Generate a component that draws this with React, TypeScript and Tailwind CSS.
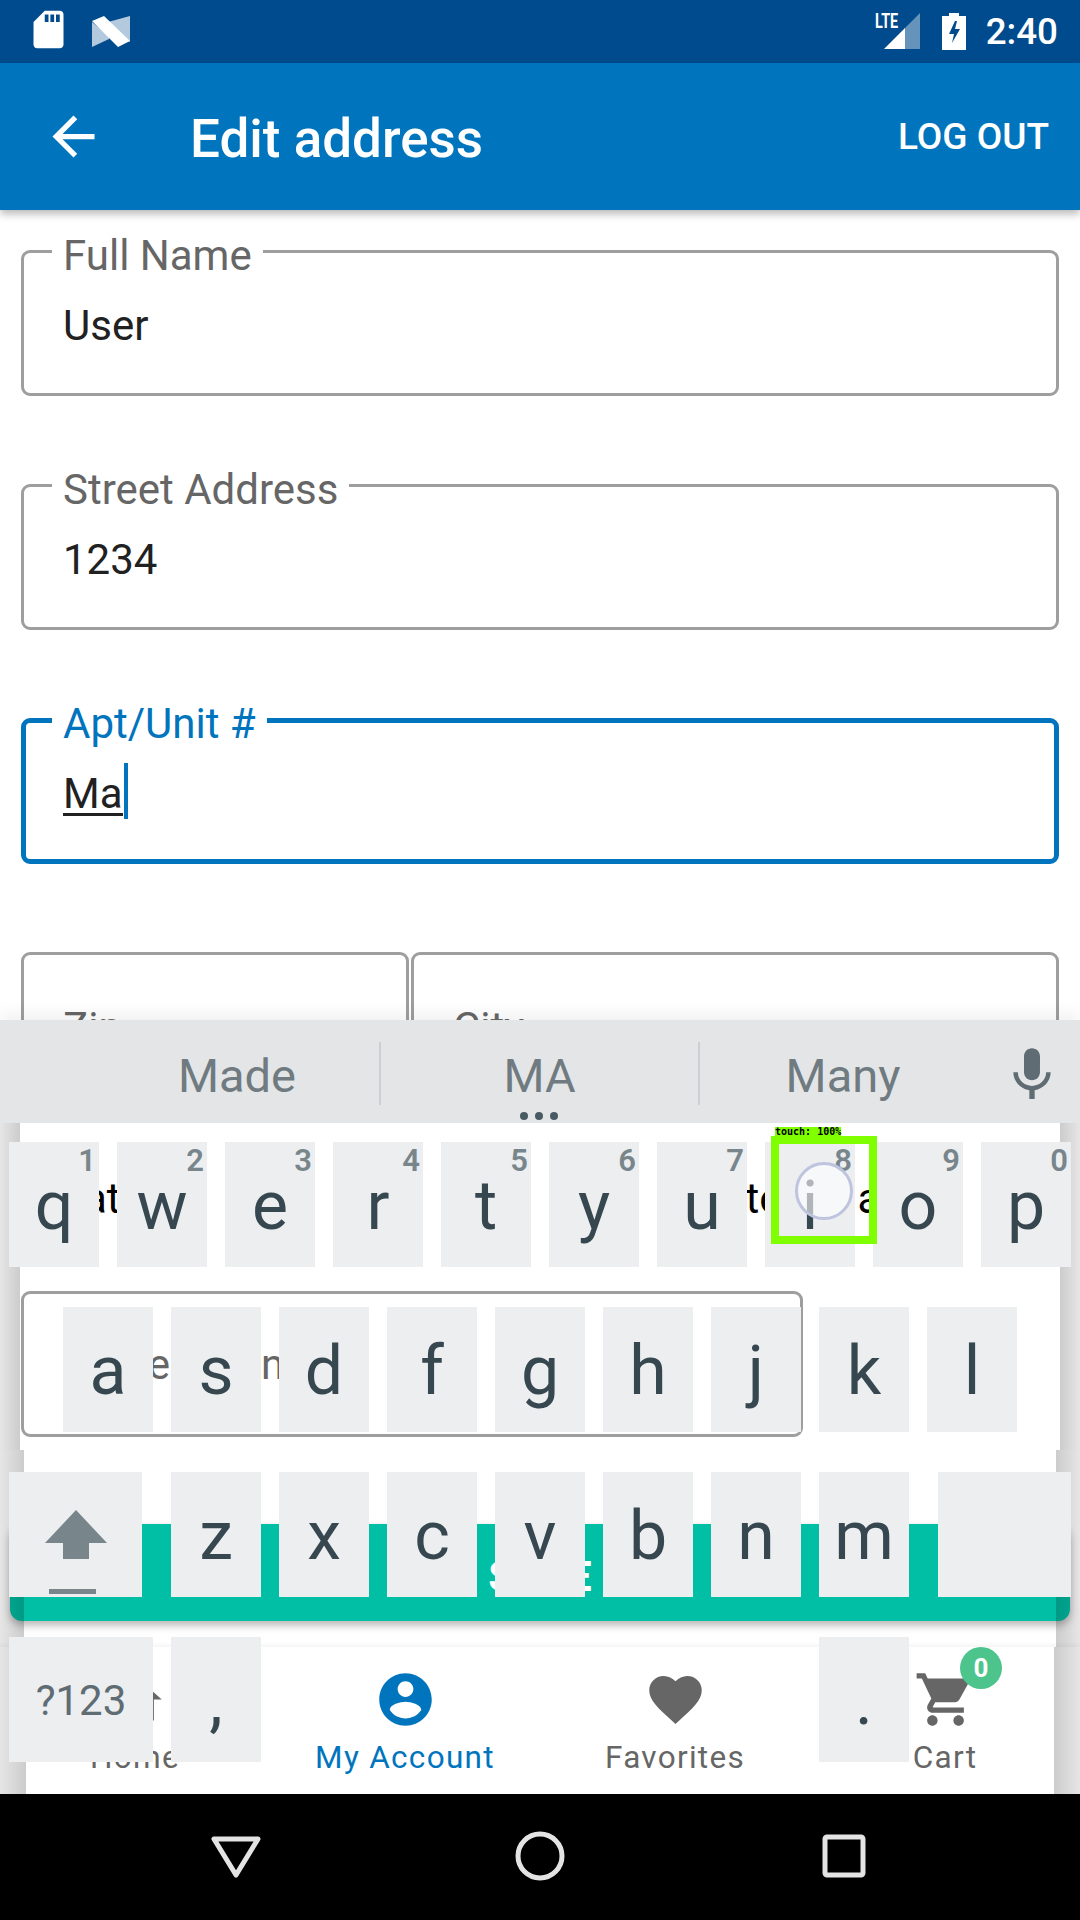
import type { ReactNode } from 'react';

const ROW_1 = [['q', '1'], ['w', '2'], ['e', '3'], ['r', '4'], ['t', '5'], ['y', '6'], ['u', '7'], ['i', '8'], ['o', '9'], ['p', '0']];
const ROW_2 = ['a', 's', 'd', 'f', 'g', 'h', 'j', 'k', 'l'];
const ROW_3 = ['z', 'x', 'c', 'v', 'b', 'n', 'm'];

function Field({ label, value, focused, placeholder, className }: { label?: string; value?: ReactNode; focused?: boolean; placeholder?: string; className?: string }) {
  return (
    <div className={`relative h-[146px] rounded-[9px] bg-white ${focused ? 'border-[5px] border-[#0075BE] pl-[37px] pt-[46px]' : 'border-[3px] border-[#9E9E9E] pl-[39px] pt-[48px]'} ${className ?? ''}`}>
      {label && (
        <span className={`absolute bg-white px-[11px] text-[42px] leading-[50px] ${focused ? 'left-[26px] top-[-24px] text-[#0075BE]' : 'left-[28px] top-[-22px] text-[#666666]'}`}>
          {label}
        </span>
      )}
      {placeholder && <span className="text-[42px] leading-[50px] text-[#666666]">{placeholder}</span>}
      {value && <div className="text-[42px] leading-[50px] text-[#212121]">{value}</div>}
    </div>
  );
}

function Key({ letter, digit, className }: { letter?: ReactNode; digit?: string; className?: string }) {
  return (
    <div className={`relative flex h-[125px] items-center justify-center bg-[#ECEEF0] pt-[3px] text-[68px] leading-[122px] text-[#37474F] ${className ?? 'w-[90px]'}`}>
      {digit && <span className="absolute right-[3px] top-[1px] text-[31px] font-semibold leading-[36px] text-[#78868C]">{digit}</span>}
      {letter}
    </div>
  );
}

function NavItem({ label, active, children }: { label: string; active?: boolean; children: ReactNode }) {
  return (
    <div className={`relative flex flex-1 flex-col items-center pt-[21px] ${active ? 'text-[#0075BE]' : 'text-[#666666]'}`}>
      {children}
      <span className="mt-[7px] text-[31.5px] leading-[40px] tracking-[1.3px]">{label}</span>
    </div>
  );
}

function StatusBar() {
  return (
    <div className="flex h-[63px] items-center bg-[#004B8D] text-white">
      <svg width="45" height="45" viewBox="0 0 24 24" fill="currentColor" className="ml-[26px] mt-[-4px]">
        <path d="M18 2h-8L4.02 8 4 20c0 1.1.9 2 2 2h12c1.1 0 2-.9 2-2V4c0-1.1-.9-2-2-2zm-6 6h-2V4h2v4zm3 0h-2V4h2v4zm3 0h-2V4h2v4z" />
      </svg>
      <svg width="38" height="31" viewBox="0 0 38 31" fill="white" className="ml-[21px]">
        <polygon points="0,6 17,20 17,23 0,31" opacity="0.7" />
        <polygon points="16,6 38,0 38,26 16,8" opacity="0.7" />
        <polygon points="0,5 12,0 38,25 26,31" />
      </svg>
      <div className="relative ml-auto h-[63px] w-[36px]">
        <span className="absolute left-[-9px] top-[9px] origin-left scale-x-[0.72] text-[20px] font-bold leading-[24px]">LTE</span>
        <svg width="36" height="36" viewBox="0 0 36 36" fill="white" className="absolute left-0 top-[13px]">
          <polygon points="0,36 21,15 21,36" />
          <polygon points="21,15 36,0 36,36 21,36" opacity="0.4" />
        </svg>
      </div>
      <svg width="24" height="37" viewBox="0 0 24 37" fill="white" className="ml-[22px]">
        <path fillRule="evenodd" d="M7 0h10v3h7v34H0V3h7z M13 8 7 21h5l-2 9 8-14h-5l2-8z" />
      </svg>
      <span className="ml-[20px] mr-[22px] text-[36.75px] font-medium leading-[44px]">2:40</span>
    </div>
  );
}

function Keyboard() {
  return (
    <div className="absolute inset-x-0 top-[1020px] h-[774px] shadow-[0_-8px_14px_rgba(0,0,0,0.05)]">
      {/* dimmed edges of the page around the keys */}
      <div className="absolute left-0 top-[103px] flex h-[671px] w-[26px] flex-col">
        <div className="h-[327px] w-[20px] bg-gradient-to-r from-black/10 to-black/20" />
        <div className="h-[197px] w-[24px] bg-gradient-to-r from-black/10 to-black/20" />
        <div className="h-[147px] w-[26px] bg-gradient-to-r from-black/10 to-black/20" />
      </div>
      <div className="absolute right-0 top-[103px] flex h-[671px] w-[26px] flex-col items-end">
        <div className="h-[327px] w-[20px] bg-gradient-to-l from-black/10 to-black/20" />
        <div className="h-[197px] w-[24px] bg-gradient-to-l from-black/10 to-black/20" />
        <div className="h-[147px] w-[26px] bg-gradient-to-l from-black/10 to-black/20" />
      </div>

      {/* suggestion strip */}
      <div className="relative flex h-[103px] items-start bg-[#E3E5E7] text-[47px] leading-[52px] text-[#6F7B80]">
        <div className="flex h-[85px] w-[379px] items-center justify-end pr-[83px] pt-[26px]">Made</div>
        <div className="mt-[22px] h-[63px] w-[2px] bg-[#CDD0D2]" />
        <div className="flex h-[85px] w-[317px] items-center justify-center pt-[26px]">MA</div>
        <div className="mt-[22px] h-[63px] w-[2px] bg-[#CDD0D2]" />
        <div className="flex h-[85px] w-[286px] items-center justify-center pt-[26px]">Many</div>
        <svg width="64" height="64" viewBox="0 0 24 24" fill="#5F6C73" className="ml-[14px] mt-[23px] shrink-0">
          <path d="M12 14c1.66 0 2.99-1.34 2.99-3L15 5c0-1.66-1.34-3-3-3S9 3.34 9 5v6c0 1.66 1.34 3 3 3zm5.3-3c0 3-2.54 5.1-5.3 5.1S6.7 14 6.7 11H5c0 3.41 2.72 6.23 6 6.72V21h2v-3.28c3.28-.48 6-3.3 6-6.72h-1.7z" />
        </svg>
        <div className="absolute left-[520px] top-[92px] flex gap-[7px]">
          <span className="size-[8px] rounded-full bg-[#4A5A63]" />
          <span className="size-[8px] rounded-full bg-[#4A5A63]" />
          <span className="size-[8px] rounded-full bg-[#4A5A63]" />
        </div>
      </div>

      {/* keys */}
      <div className="relative flex flex-col gap-[40px] px-[9px] pt-[19px]">
        <div className="flex gap-[18px]">
          {ROW_1.map(([l, d]) => <Key key={l} letter={l} digit={d} />)}
        </div>
        <div className="flex gap-[18px] pl-[54px]">
          {ROW_2.map((l) => <Key key={l} letter={l} />)}
        </div>
        <div className="flex gap-[18px]">
          <Key className="mr-[11px] w-[133px]" letter={
            <svg width="62" height="84" viewBox="0 0 62 84" fill="#78868C" className="mt-[35px] self-start">
              <polygon points="31,0 62,33 44,33 44,49 18,49 18,33 0,33" />
              <rect x="4" y="79" width="47" height="5" />
            </svg>
          } />
          {ROW_3.map((l) => <Key key={l} letter={l} />)}
          <Key className="ml-[11px] w-[133px]" />
        </div>
        <div className="flex gap-[18px]">
          <Key className="w-[144px] !pb-0 !pt-[2px] !text-[42px] !text-[#5F6C73]" letter="?123" />
          <Key letter="," />
          <div className="w-[522px]" />
          <Key letter="." />
        </div>
      </div>

      {/* touch indicator */}
      <div className="absolute left-[795px] top-[142px] size-[58px] rounded-full border-[3px] border-[#BFC4DE] bg-white/60" />
      <div className="absolute left-[771px] top-[116px] h-[108px] w-[106px] border-[8px] border-[#7FFF00]" />
      <div className="absolute left-[775px] top-[107px] h-[10px] w-[66px] whitespace-nowrap bg-[#7FFF00] font-['DejaVu_Sans_Mono',monospace] text-[10px] font-bold leading-[10px] text-black">touch: 100%</div>
    </div>
  );
}

export default function App() {
  return (
    <div className="relative flex h-[1920px] w-[1080px] flex-col overflow-hidden bg-white font-[Roboto,sans-serif]">
      <StatusBar />

      <header className="relative z-10 flex h-[147px] shrink-0 items-center bg-[#0075BE] text-white shadow-[0_4px_8px_rgba(0,0,0,0.28)]">
        <svg width="63" height="63" viewBox="0 0 24 24" fill="currentColor" className="ml-[42px]">
          <path d="M20 11H7.83l5.59-5.59L12 4l-8 8 8 8 1.41-1.41L7.83 13H20v-2z" />
        </svg>
        <h1 className="ml-[85px] mt-[4px] text-[53px] font-medium leading-[62px]">Edit address</h1>
        <span className="ml-auto mr-[31px] mt-[1px] text-[37px] font-medium leading-[44px]">LOG OUT</span>
      </header>

      <main className="flex h-[1437px] flex-col overflow-hidden px-[21px] pt-[40px]">
        <Field className="mb-[88px]" label="Full Name" value="User" />
        <Field className="mb-[88px]" label="Street Address" value="1234" />
        <Field
          className="mb-[88px]"
          focused
          label="Apt/Unit #"
          value={
            <span className="relative inline-block">
              Ma
              <span className="absolute inset-x-0 top-[44px] h-[3px] bg-[#212121]" />
              <span className="absolute right-[-5px] top-[-6px] h-[56px] w-[4px] bg-[#0075BE]" />
            </span>
          }
        />
        <div className="flex gap-[2px]">
          <Field className="w-[388px]" placeholder="Zip" />
          <Field className="flex-1" placeholder="City" />
        </div>
        <div className="mt-[76px] flex h-[50px] text-[42px] leading-[50px] text-black">
          <span className="ml-[63px]">at</span>
          <span className="ml-[625px]">te</span>
          <span className="ml-[76px]">a</span>
        </div>
        <div className="mt-[67px] h-[146px] w-[782px] rounded-[9px] border-[3px] border-[#9E9E9E] pl-[39px] pt-[46px] text-[42px] leading-[50px] text-[#666666]">
          <span className="ml-[48px]">me</span>
          <span className="ml-[91px]">n</span>
        </div>
        <button className="-mx-[11px] mt-[87px] h-[97px] shrink-0 rounded-[12px] bg-[#00BFA5] pt-[8px] text-[42px] font-bold text-white shadow-[0_4px_8px_rgba(0,0,0,0.3)]">
          SAVE
        </button>
      </main>

      <nav className="flex h-[147px] shrink-0 bg-white shadow-[0_-2px_4px_rgba(0,0,0,0.05)]">
        <NavItem label="Home">
          <svg width="63" height="63" viewBox="0 0 24 24" fill="currentColor"><path d="M10 20v-6h4v6h5v-8h3L12 3 2 12h3v8z" /></svg>
        </NavItem>
        <NavItem label="My Account" active>
          <svg width="63" height="63" viewBox="0 0 24 24" fill="currentColor"><path d="M12 2C6.48 2 2 6.48 2 12s4.48 10 10 10 10-4.48 10-10S17.52 2 12 2zm0 3c1.66 0 3 1.34 3 3s-1.34 3-3 3-3-1.34-3-3 1.34-3 3-3zm0 14.2c-2.5 0-4.71-1.28-6-3.22.03-1.99 4-3.08 6-3.08 1.99 0 5.97 1.09 6 3.08-1.29 1.94-3.5 3.22-6 3.22z" /></svg>
        </NavItem>
        <NavItem label="Favorites">
          <svg width="63" height="63" viewBox="0 0 24 24" fill="currentColor"><path d="M12 21.35l-1.45-1.32C5.4 15.36 2 12.28 2 8.5 2 5.42 4.42 3 7.5 3c1.74 0 3.41.81 4.5 2.09C13.09 3.81 14.76 3 16.5 3 19.58 3 22 5.42 22 8.5c0 3.78-3.4 6.86-8.55 11.54L12 21.35z" /></svg>
        </NavItem>
        <NavItem label="Cart">
          <svg width="63" height="63" viewBox="0 0 24 24" fill="currentColor"><path d="M7 18c-1.1 0-1.99.9-1.99 2S5.9 22 7 22s2-.9 2-2-.9-2-2-2zM1 2v2h2l3.6 7.59-1.35 2.45c-.16.28-.25.61-.25.96 0 1.1.9 2 2 2h12v-2H7.42c-.14 0-.25-.11-.25-.25l.03-.12.9-1.63h7.45c.75 0 1.41-.41 1.75-1.03l3.58-6.49c.08-.14.12-.31.12-.48 0-.55-.45-1-1-1H5.21l-.94-2H1zm16 16c-1.1 0-1.99.9-1.99 2s.89 2 1.99 2 2-.9 2-2-.9-2-2-2z" /></svg>
          <span className="absolute left-[150px] top-0 flex size-[42px] items-center justify-center rounded-full bg-[#4DC48C] text-[26px] font-bold leading-none text-white">0</span>
        </NavItem>
      </nav>

      <div className="flex h-[126px] shrink-0 items-center justify-center gap-[236px] bg-black pb-[3px]">
        <svg width="68" height="68" viewBox="0 0 68 68" fill="none" stroke="#E4E4E4" strokeWidth="5" strokeLinejoin="round"><polygon points="12,17 56,17 34,53" /></svg>
        <svg width="68" height="68" viewBox="0 0 68 68" fill="none" stroke="#E4E4E4" strokeWidth="5"><circle cx="34" cy="34" r="22" /></svg>
        <svg width="68" height="68" viewBox="0 0 68 68" fill="none" stroke="#E4E4E4" strokeWidth="5" strokeLinejoin="round"><rect x="15" y="15" width="38" height="38" rx="2" /></svg>
      </div>

      <Keyboard />
    </div>
  );
}
